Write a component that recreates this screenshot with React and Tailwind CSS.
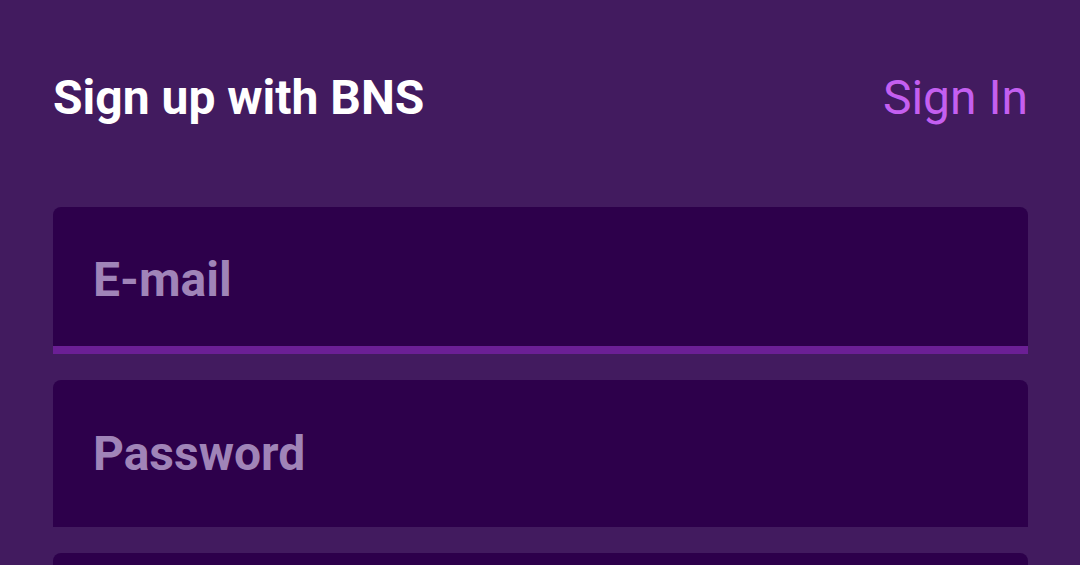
import { useState } from 'react';

function Field({ placeholder, type = 'text', active = false }) {
  const [value, setValue] = useState('');
  return (
    <div
      className={`h-[147px] shrink-0 rounded-t-lg bg-[#2d004b] flex items-center ${
        active ? 'border-b-[8px] border-[#6b1f95] pt-[6px]' : ''
      }`}
    >
      <input
        type={type}
        value={value}
        onChange={(e) => setValue(e.target.value)}
        placeholder={placeholder}
        className="w-full bg-transparent px-[40px] text-[48px] font-bold text-white placeholder:text-[#a084b8] focus:outline-none"
      />
    </div>
  );
}

export default function App() {
  return (
    <div
      className="h-screen overflow-hidden bg-[#421b5f] pl-[53px] pr-[52px] pt-[70px]"
      style={{ fontFamily: 'Roboto, "Noto Sans", sans-serif' }}
    >
      {/* Header */}
      <div className="flex h-[56px] items-center justify-between">
        <h1 className="text-[48px] font-bold leading-none text-white">Sign up with BNS</h1>
        <a href="#" className="text-[48px] leading-none text-[#c45ff0]">
          Sign In
        </a>
      </div>

      {/* Form */}
      <form className="mt-[81px] flex flex-col gap-[26px]" onSubmit={(e) => e.preventDefault()}>
        <Field placeholder="E-mail" type="email" active />
        <Field placeholder="Password" type="password" />
        <Field placeholder="Confirm password" type="password" />
      </form>
    </div>
  );
}
